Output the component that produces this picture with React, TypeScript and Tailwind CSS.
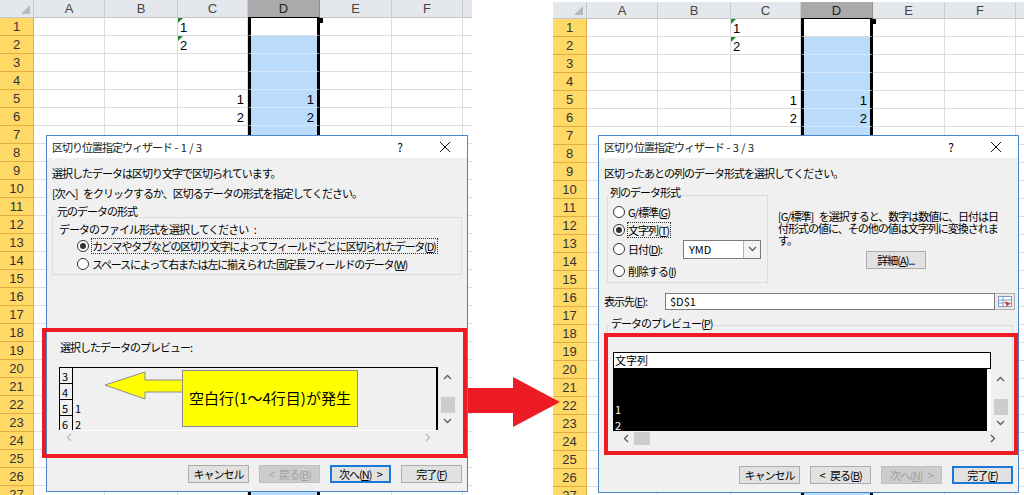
import React from 'react';

const CJK = "font-[family-name:'Noto_Sans_CJK_JP','Liberation_Sans',sans-serif]";
const SANS = "font-[family-name:'Liberation_Sans',sans-serif]";

const COLS = [
  { key: 'A', w: 'w-[71px]' },
  { key: 'B', w: 'w-[73px]' },
  { key: 'C', w: 'w-[70px]' },
  { key: 'D', w: 'w-[72px]' },
  { key: 'E', w: 'w-[72px]' },
  { key: 'F', w: 'w-[71px]' },
];

type CellVal = { text: string; right?: boolean; flag?: boolean };
const DATA: Record<string, CellVal> = {
  C1: { text: '1', flag: true },
  C2: { text: '2', flag: true },
  C5: { text: '1', right: true },
  C6: { text: '2', right: true },
  D5: { text: '1', right: true },
  D6: { text: '2', right: true },
};

const ROWS = Array.from({ length: 27 }, (_, i) => i + 1);

// one cell of the grid
const Cell = ({ col, row }: { col: { key: string; w: string }; row: number }) => {
  const v = DATA[col.key + row];
  let cls = 'border-r border-b border-[#dadcdd]';
  if (col.key === 'D') {
    cls =
      row === 1
        ? 'bg-white border-l-[3px] border-r-[3px] border-l-black border-r-black border-b border-b-[#dadcdd]'
        : 'bg-[#badbfa] border-l-[3px] border-r-[3px] border-l-black border-r-black border-b border-b-[#d3e5f8]';
  }
  return (
    <div className={`relative shrink-0 h-full ${col.w} ${cls}`}>
      {v && (
        <span
          className={`absolute inset-y-0 leading-[19px] text-[13px] text-black ${
            v.right ? 'right-[3px]' : 'left-[2px]'
          }`}
        >
          {v.text}
        </span>
      )}
      {v?.flag && (
        <span className="absolute left-0 top-0 w-0 h-0 border-t-[5px] border-t-[#1e8a2e] border-r-[5px] border-r-transparent" />
      )}
      {col.key === 'D' && row === 1 && (
        <span className="absolute -right-[6px] top-0 w-[5px] h-[5px] bg-black" />
      )}
    </div>
  );
};

const Sheet = ({ shifted }: { shifted?: boolean }) => (
  <div className={`flex flex-col h-full overflow-hidden bg-white ${SANS}`}>
    <div className={`flex shrink-0 ${shifted ? 'h-[17px] mt-[2px]' : 'h-[18px]'}`}>
      <div className="relative w-[34px] shrink-0 bg-[#e4e7ec] border-r border-b border-[#c3c7cc]">
        <svg className="absolute right-[3px] bottom-[3px]" width="9" height="9">
          <polygon points="9,0 9,9 0,9" fill="#b5b9bf" />
        </svg>
      </div>
      {COLS.map((c) => (
        <div
          key={c.key}
          className={`shrink-0 ${c.w} text-center text-[13px] leading-[17px] border-r ${
            c.key === 'D'
              ? 'bg-[#aaaaaa] text-[#222] border-[#8f8f8f] border-b border-b-black'
              : 'bg-[#e4e7ec] text-[#444] border-[#c8ccd1] border-b border-b-[#c3c7cc]'
          }`}
        >
          {c.key}
        </div>
      ))}
      <div className="flex-1 bg-[#e4e7ec] border-b border-[#c3c7cc]" />
    </div>
    {ROWS.map((r) => (
      <div key={r} className="flex h-[18px] shrink-0">
        <div className="w-[34px] shrink-0 bg-[#ffd966] border-r border-b border-[#e2ad45] text-center text-[13px] leading-[17px] text-[#333]">
          {r}
        </div>
        {COLS.map((c) => (
          <Cell key={c.key} col={c} row={r} />
        ))}
        <div className="flex-1 border-b border-[#dadcdd]" />
      </div>
    ))}
  </div>
);

const TitleBar = ({ title, step }: { title: string; step: string }) => (
  <div className="h-[22px] shrink-0 bg-white flex items-center pl-[5px]">
    <span className="flex-1 text-[11px] text-[#222] whitespace-pre">
      {title}
      <span className="tracking-normal [word-spacing:0px]">{step}</span>
    </span>
    <span className="w-[20px] text-center text-[12px] tracking-normal">?</span>
    <svg className="ml-[29px] mr-[16px]" width="12" height="12" viewBox="0 0 12 12">
      <line x1="1" y1="1" x2="11" y2="11" stroke="#111" strokeWidth="1" />
      <line x1="11" y1="1" x2="1" y2="11" stroke="#111" strokeWidth="1" />
    </svg>
  </div>
);

const Radio = ({ checked }: { checked?: boolean }) => (
  <span className="w-[12px] h-[12px] shrink-0 rounded-full border border-[#333] bg-white flex items-center justify-center">
    {checked && <span className="w-[6px] h-[6px] rounded-full bg-[#333]" />}
  </span>
);

type BtnKind = 'normal' | 'focus' | 'disabled';
const Btn = ({ children, kind = 'normal', w = 'w-[61px]' }: { children: React.ReactNode; kind?: BtnKind; w?: string }) => {
  const look =
    kind === 'focus'
      ? 'bg-[#e1e1e1] border-2 border-[#1a78d6] text-black'
      : kind === 'disabled'
      ? 'bg-[#cccccc] border border-[#bfbfbf] text-[#a0a0a0]'
      : 'bg-[#e1e1e1] border border-[#adadad] text-black';
  return (
    <div className={`${w} h-[18px] shrink-0 flex items-center justify-center text-[11px] whitespace-pre ${look}`}>{children}</div>
  );
};

const ChevUp = () => (
  <svg width="9" height="6" viewBox="0 0 9 6">
    <polyline points="1,5 4.5,1.5 8,5" stroke="#606060" strokeWidth="1.4" fill="none" />
  </svg>
);
const ChevDown = () => (
  <svg width="9" height="6" viewBox="0 0 9 6">
    <polyline points="1,1 4.5,4.5 8,1" stroke="#606060" strokeWidth="1.4" fill="none" />
  </svg>
);
const ChevLeft = ({ c = '#606060' }: { c?: string }) => (
  <svg width="6" height="9" viewBox="0 0 6 9">
    <polyline points="5,1 1.5,4.5 5,8" stroke={c} strokeWidth="1.4" fill="none" />
  </svg>
);
const ChevRight = ({ c = '#606060' }: { c?: string }) => (
  <svg width="6" height="9" viewBox="0 0 6 9">
    <polyline points="1,1 4.5,4.5 1,8" stroke={c} strokeWidth="1.4" fill="none" />
  </svg>
);

const VScroll = () => (
  <div className="w-[19px] shrink-0 flex flex-col items-center bg-[#f0f0f0]">
    <div className="h-[20px] flex items-center justify-center">
      <ChevUp />
    </div>
    <div className="mt-[10px] h-[16px] w-[14px] bg-[#cdcdcd]" />
    <div className="h-[16px] flex items-center justify-center">
      <ChevDown />
    </div>
  </div>
);

const Underline = ({ c }: { c: string }) => <span className="underline underline-offset-1">{c}</span>;

const LeftDialog = () => (
  <div
    className={`absolute left-[46px] top-[135px] w-[422px] h-[357px] border border-[#4a86c8] bg-[#f0f0f0] flex flex-col ${CJK} text-[11px] tracking-[-1px] [word-spacing:4px] text-black`}
  >
    <TitleBar title="区切り位置指定ウィザード" step=" - 1 / 3" />
    <div className="mt-[7px] h-[16px] leading-[16px] pl-[5px]">選択したデータは区切り文字で区切られています。</div>
    <div className="mt-[4px] h-[16px] leading-[16px] pl-[5px]">[次へ] をクリックするか、区切るデータの形式を指定してください。</div>
    <div className="ml-[5px] w-[410px] mt-[3px] flex flex-col">
      <div className="relative z-[1] ml-[4px] px-[1px] w-fit h-[14px] leading-[14px] bg-[#f0f0f0]">元のデータの形式</div>
      <div className="-mt-[1px] h-[58px] border border-[#dcdcdc] flex flex-col pt-[3px]">
        <div className="h-[16px] leading-[16px] pl-[6px]">データのファイル形式を選択してください :</div>
        <div className="h-[18px] flex items-center pl-[24px] gap-[2px]">
          <Radio checked />
          <span className="border border-dotted border-[#333] leading-[14px] pr-[1px] tracking-[-1.2px]">
            カンマやタブなどの区切り文字によってフィールドごとに区切られたデータ(<Underline c="D" />)
          </span>
        </div>
        <div className="h-[18px] flex items-center pl-[24px] gap-[3px]">
          <Radio />
          <span className="leading-[14px] tracking-[-1.2px]">
            スペースによって右または左に揃えられた固定長フィールドのデータ(<Underline c="W" />)
          </span>
        </div>
      </div>
    </div>
    <div className="mt-[64px] h-[16px] leading-[16px] ml-[13px]">選択したデータのプレビュー:</div>
    <div className="mt-[12px] ml-[12px] w-[398px] h-[63px] flex">
      <div className="flex-1 border-t border-l border-r-2 border-black bg-[#f0f0f0] overflow-hidden flex flex-col">
        {[
          ['3', ''],
          ['4', ''],
          ['5', '1'],
          ['6', '2'],
        ].map(([n, v]) => (
          <div key={n} className="flex h-[16px] shrink-0">
            <div className="w-[13px] border-r border-b border-black text-[11px] leading-[16px] pl-[2px] tracking-normal">{n}</div>
            <div className="pl-[2px] text-[11px] leading-[16px] tracking-normal">{v}</div>
          </div>
        ))}
      </div>
      <VScroll />
    </div>
    <div className="ml-[12px] w-[379px] h-[14px] border-t border-white flex items-center justify-between px-[7px]">
      <ChevLeft c="#bdbdbd" />
      <ChevRight c="#bdbdbd" />
    </div>
    <div className="mt-[21px] pr-[5px] flex justify-end gap-[10px]">
      <Btn>キャンセル</Btn>
      <Btn kind="disabled">&lt; 戻る(<Underline c="B" />)</Btn>
      <Btn kind="focus">次へ(<Underline c="N" />) &gt;</Btn>
      <Btn>完了(<Underline c="F" />)</Btn>
    </div>
  </div>
);

const RangeIcon = () => (
  <svg width="14" height="11" viewBox="0 0 14 11">
    <rect x="0.5" y="0.5" width="13" height="10" fill="#fff" stroke="#7d9cc4" />
    <line x1="0.5" y1="4" x2="13.5" y2="4" stroke="#7d9cc4" />
    <line x1="0.5" y1="7" x2="13.5" y2="7" stroke="#7d9cc4" />
    <line x1="5" y1="0.5" x2="5" y2="10.5" stroke="#7d9cc4" />
    <polygon points="7,5 13,8 10,9 9,11" fill="#d8312b" />
  </svg>
);

const RightDialog = () => (
  <div
    className={`absolute left-[45px] top-[135px] w-[421px] h-[358px] border border-[#4a86c8] bg-[#f0f0f0] flex flex-col ${CJK} text-[11px] tracking-[-1px] [word-spacing:4px] text-black`}
  >
    <TitleBar title="区切り位置指定ウィザード" step=" - 3 / 3" />
    <div className="mt-[7px] h-[16px] leading-[16px] pl-[5px]">区切ったあとの列のデータ形式を選択してください。</div>
    <div className="mt-[4px] flex">
      <div className="ml-[8px] w-[161px] flex flex-col">
        <div className="relative z-[1] ml-[2px] px-[1px] w-fit h-[14px] leading-[14px] bg-[#f0f0f0]">列のデータ形式</div>
        <div className="-mt-[4px] h-[88px] border border-[#dcdcdc] flex flex-col pt-[7px] pl-[5px]">
          <div className="h-[18px] flex items-center gap-[3px]">
            <Radio />
            <span>G/標準(<Underline c="G" />)</span>
          </div>
          <div className="h-[18px] flex items-center gap-[2px]">
            <Radio checked />
            <span className="border border-dotted border-[#333] leading-[14px] pr-[1px]">
              文字列(<Underline c="T" />)
            </span>
          </div>
          <div className="h-[22px] flex items-center gap-[3px]">
            <Radio />
            <span className="w-[52px]">
              日付(<Underline c="D" />):
            </span>
            <div className="w-[78px] h-[19px] border border-[#7a7a7a] bg-white flex">
              <span className="flex-1 pl-[5px] leading-[17px] tracking-normal">YMD</span>
              <div className="w-[17px] border-l border-[#b4b4b4] bg-[#f3f3f3] flex items-center justify-center">
                <ChevDown />
              </div>
            </div>
          </div>
          <div className="h-[22px] flex items-center gap-[3px]">
            <Radio />
            <span>
              削除する(<Underline c="I" />)
            </span>
          </div>
        </div>
      </div>
      <div className="ml-[10px] w-[236px] pt-[25px] flex flex-col">
        <div className="leading-[12px] whitespace-nowrap">
          [G/標準] を選択すると、数字は数値に、日付は日
          <br />
          付形式の値に、その他の値は文字列に変換されま
          <br />
          す。
        </div>
        <div className="mt-[5px] mx-auto">
          <Btn w="w-[60px]">
            詳細(<Underline c="A" />)...
          </Btn>
        </div>
      </div>
    </div>
    <div className="mt-[10px] h-[17px] flex">
      <span className="ml-[5px] w-[61px] leading-[17px]">
        表示先(<Underline c="E" />):
      </span>
      <div className="w-[330px] h-[17px] border border-[#7a7a7a] bg-white pl-[4px] leading-[15px] tracking-normal">$D$1</div>
      <div className="w-[20px] h-[17px] border border-[#adadad] border-l-0 bg-[#eaeaea] flex items-center justify-center">
        <RangeIcon />
      </div>
    </div>
    <div className="relative z-[1] mt-[6px] ml-[11px] px-[1px] w-fit h-[14px] leading-[14px] bg-[#f0f0f0]">
      データのプレビュー(<Underline c="P" />)
    </div>
    <div className="-mt-[5px] ml-[8px] w-[406px] h-[130px] border border-[#dcdcdc] pt-[26px] pl-[5px] flex flex-col">
      <div className="w-[378px] h-[17px] border border-black bg-white leading-[15px] pl-[1px] tracking-normal">文字列</div>
      <div className="flex h-[62px]">
        <div className="w-[374px] bg-black text-white text-[11px] leading-[16px] pl-[2px] pt-[32px] tracking-normal">
          <div>1</div>
          <div>2</div>
        </div>
        <div className="w-[4px] bg-white" />
        <VScroll />
      </div>
      <div className="w-[397px] h-[14px] flex items-center">
        <div className="w-[16px] flex justify-end">
          <ChevLeft />
        </div>
        <div className="ml-[5px] w-[16px] h-[13px] bg-[#cdcdcd]" />
        <div className="flex-1" />
        <div className="w-[20px]">
          <ChevRight />
        </div>
      </div>
    </div>
    <div className="mt-[11px] pr-[5px] flex justify-end gap-[10px]">
      <Btn>キャンセル</Btn>
      <Btn>&lt; 戻る(<Underline c="B" />)</Btn>
      <Btn kind="disabled">次へ(<Underline c="N" />) &gt;</Btn>
      <Btn kind="focus">完了(<Underline c="F" />)</Btn>
    </div>
  </div>
);

export default function App() {
  return (
    <div className="relative w-[1024px] h-[495px] overflow-hidden bg-white flex">
      {/* before */}
      <div className="relative w-[472px] h-full shrink-0">
        <Sheet />
        <LeftDialog />
        <div className="absolute left-[42px] top-[328px] w-[425px] h-[130px] border-4 border-[#ed1c24]" />
        <svg className="absolute left-[103px] top-[370px]" width="82" height="32" viewBox="0 0 82 32">
          <polygon points="2,15 42,2 42,10 81,10 81,22 42,22 42,29" fill="#ffff00" stroke="#8c8c8c" strokeWidth="1" />
        </svg>
        <div
          className={`absolute left-[182px] top-[370px] w-[176px] h-[57px] bg-[#ffff00] border border-[#8c8c8c] flex items-center justify-center text-[15px] text-black ${CJK}`}
        >
          空白行(1～4行目)が発生
        </div>
      </div>
      <div className="w-[81px] shrink-0" />
      {/* after */}
      <div className="relative w-[471px] h-full shrink-0">
        <Sheet shifted />
        <RightDialog />
        <div className="absolute left-[51px] top-[333px] w-[414px] h-[122px] border-4 border-[#ed1c24]" />
      </div>
      <svg className="absolute left-[466px] top-[375px]" width="96" height="54" viewBox="0 0 96 54">
        <polygon points="2,13 47,13 47,2 94,27 47,52 47,38 2,38" fill="#ed1c24" />
      </svg>
    </div>
  );
}
